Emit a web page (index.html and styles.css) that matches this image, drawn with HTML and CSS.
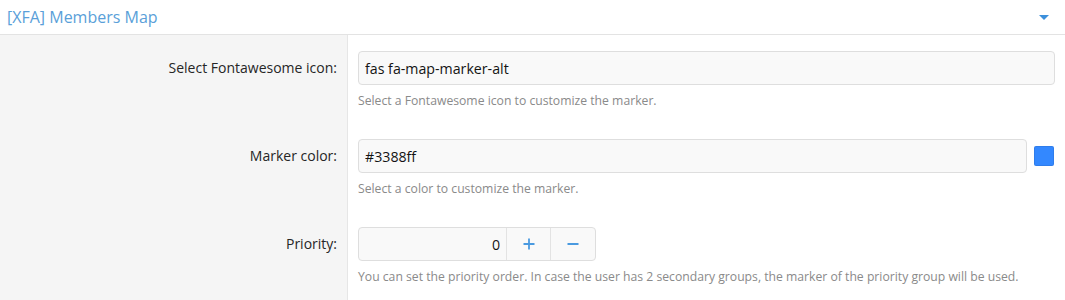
FILE: index.html
```html
<!DOCTYPE html>
<html>
<head>
<meta charset="utf-8">
<link rel="stylesheet" href="styles.css">
</head>
<body>
<div class="block">
  <div class="block-header">
    <span class="block-title">[XFA] Members Map</span>
    <span class="caret"></span>
  </div>
  <div class="form">
    <div class="row">
      <div class="label">Select Fontawesome icon:</div>
      <div class="control">
        <input class="input" type="text" value="fas fa-map-marker-alt">
        <div class="hint">Select a Fontawesome icon to customize the marker.</div>
      </div>
    </div>
    <div class="row">
      <div class="label">Marker color:</div>
      <div class="control">
        <div class="color-wrap">
          <input class="input" type="text" value="#3388ff">
          <span class="swatch"></span>
        </div>
        <div class="hint">Select a color to customize the marker.</div>
      </div>
    </div>
    <div class="row">
      <div class="label">Priority:</div>
      <div class="control">
        <div class="number">
          <input class="num-input" type="text" value="0">
          <span class="num-btn num-up">
            <svg width="12" height="12" viewBox="0 0 12 12"><path d="M6 0.5v11M0.5 6h11" stroke="#4a9ae0" stroke-width="1.8" fill="none"/></svg>
          </span>
          <span class="num-btn num-down">
            <svg width="12" height="12" viewBox="0 0 12 12"><path d="M0.5 6h11" stroke="#4a9ae0" stroke-width="1.8" fill="none"/></svg>
          </span>
        </div>
        <div class="hint">You can set the priority order. In case the user has 2 secondary groups, the marker of the priority group will be used.</div>
      </div>
    </div>
  </div>
</div>
</body>
</html>
```
FILE: styles.css
```css
html, body {
  margin: 0;
  padding: 0;
  background: #fff;
}
body {
  font-family: "Open Sans", "Noto Sans", sans-serif;
  color: #141414;
}
.block {
  width: 1065px;
}
.block-header {
  height: 35px;
  box-sizing: border-box;
  border-bottom: 1px solid #e3e3e3;
  display: flex;
  align-items: center;
  justify-content: space-between;
  padding: 0 16px 0 7px;
}
.block-title {
  font-size: 16px;
  color: #5a9fd9;
}
.caret {
  width: 0;
  height: 0;
  border-left: 5px solid transparent;
  border-right: 5px solid transparent;
  border-top: 5px solid #3c90dc;
  margin-top: 1px;
}
.form {
  display: flex;
  flex-direction: column;
}
.row {
  display: flex;
  height: 88px;
}
.row:last-child {
  height: 92px;
}
.label {
  width: 348px;
  box-sizing: border-box;
  background: #f5f5f5;
  border-right: 1px solid #e6e6e6;
  text-align: right;
  padding: 23px 10px 0 0;
  font-size: 14px;
  color: #262626;
}
.control {
  flex: 1;
  padding: 16px 10px 0 10px;
}
.input {
  display: block;
  width: 100%;
  box-sizing: border-box;
  height: 34px;
  border: 1px solid #dedede;
  border-radius: 4px;
  background: #f9f9f9;
  padding: 0 6px;
  font-family: inherit;
  font-size: 14.2px;
  color: #141414;
  outline: none;
}
.hint {
  font-size: 12.2px;
  color: #8a8a8a;
  margin-top: 7px;
}
.color-wrap {
  display: flex;
  align-items: center;
  gap: 7px;
}
.color-wrap .input {
  flex: 1;
}
.swatch {
  width: 20px;
  height: 20px;
  margin-right: 1px;
  border-radius: 2px;
  background: #3388ff;
  box-shadow: inset 0 0 0 1px rgba(0,0,0,0.08);
}
.number {
  display: flex;
  width: 238px;
  height: 34px;
  box-sizing: border-box;
  border: 1px solid #dedede;
  border-radius: 4px;
  background: #f9f9f9;
  overflow: hidden;
}
.num-input {
  flex: 1;
  min-width: 0;
  border: none;
  background: transparent;
  text-align: right;
  padding: 0 6px;
  font-family: inherit;
  font-size: 14.2px;
  color: #141414;
  outline: none;
}
.num-btn {
  box-sizing: border-box;
  border-left: 1px solid #e3e3e3;
  display: flex;
  align-items: center;
  justify-content: center;
}
.num-up {
  width: 44px;
}
.num-down {
  width: 45px;
}
```
